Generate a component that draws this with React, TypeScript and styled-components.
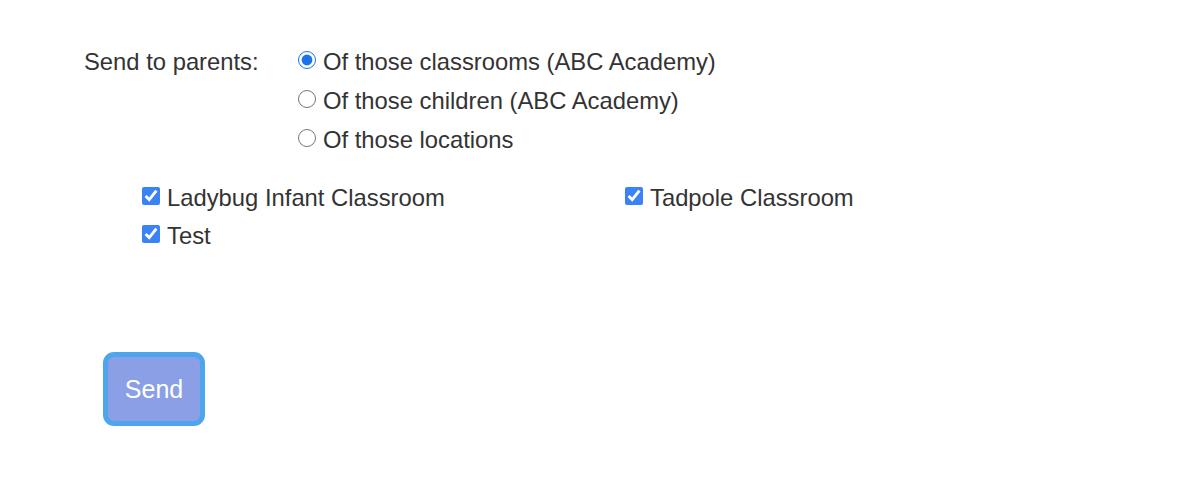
import * as React from 'react'
import styled, { createGlobalStyle } from 'styled-components'

const GlobalStyle = createGlobalStyle`
	html, body {
		margin: 0;
		padding: 0;
		background: #ffffff;
	}
	body {
		font-family: "Liberation Sans", Arial, sans-serif;
		color: #333333;
	}
`

const classrooms = [
	'Ladybug Infant Classroom',
	'Tadpole Classroom',
	'Test'
]

const recipients = [
	'Of those classrooms (ABC Academy)',
	'Of those children (ABC Academy)',
	'Of those locations'
]

export default function App() {
	const [recipient, setRecipient] = React.useState(0)
	const [checked, setChecked] = React.useState(classrooms.map(() => true))

	const toggle = (i: number) => {
		setChecked(checked.map((c, j) => (j === i ? !c : c)))
	}

	return (
		<Page>
			<GlobalStyle />
			<SendRow>
				<FieldLabel>Send to parents:</FieldLabel>
				<RadioList>
					{recipients.map((text, i) => (
						<OptionLabel key={text}>
							<Radio
								type="radio"
								name="recipient"
								checked={recipient === i}
								onChange={() => setRecipient(i)}
							/>
							{text}
						</OptionLabel>
					))}
				</RadioList>
			</SendRow>
			<ClassroomGrid>
				{classrooms.map((name, i) => (
					<OptionLabel key={name}>
						<Checkbox type="checkbox" checked={checked[i]} onChange={() => toggle(i)} />
						{name}
					</OptionLabel>
				))}
			</ClassroomGrid>
			<SendButton type="button">Send</SendButton>
		</Page>
	)
}

const Page = styled.div`
	padding: 42px 0 0 84px;
	font-family: "Liberation Sans", Arial, sans-serif;
	font-size: 23.8px;
	line-height: 39px;
`

const SendRow = styled.div`
	display: flex;
	align-items: flex-start;
`

const FieldLabel = styled.div`
	width: 214px;
`

const RadioList = styled.div`
	display: flex;
	flex-direction: column;
`

const OptionLabel = styled.label`
	display: flex;
	align-items: center;
	gap: 7px;
	white-space: nowrap;
	color: #333333;
`

const Radio = styled.input`
	width: 18px;
	height: 18px;
	margin: 0;
	accent-color: #1a73e8;
	position: relative;
	top: -2px;
`

const Checkbox = styled.input`
	width: 18px;
	height: 18px;
	margin: 0;
	accent-color: #3b82f6;
	position: relative;
	top: -2px;
`

const ClassroomGrid = styled.div`
	display: grid;
	grid-template-columns: 483px auto;
	justify-content: start;
	margin: 20px 0 0 58px;
	line-height: 38px;
`

const SendButton = styled.button`
	display: block;
	margin: 97px 0 0 19px;
	width: 102px;
	height: 74px;
	padding: 0;
	background: #8a9fe6;
	border: 5px solid #4da6ec;
	border-radius: 11px;
	color: #ffffff;
	font-family: "Liberation Sans", Arial, sans-serif;
	font-size: 25px;
	cursor: pointer;
`
